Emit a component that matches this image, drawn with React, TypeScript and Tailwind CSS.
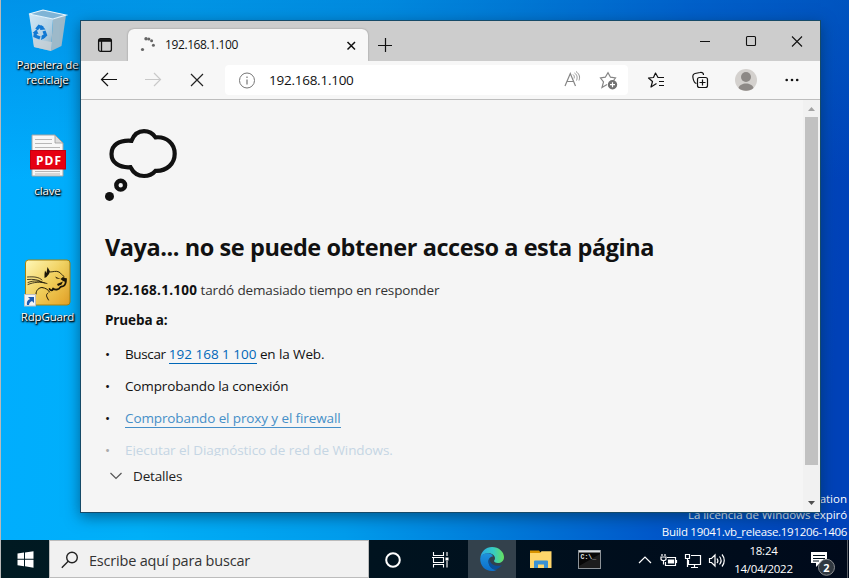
import React from 'react';

function RecycleBin() {
  return (
    <svg className="-translate-x-px" width="44" height="46" viewBox="0 0 44 46">
      <defs>
        <linearGradient id="bin" x1="0" x2="1" y1="0" y2="1">
          <stop offset="0" stopColor="#cfe6f5" />
          <stop offset="0.6" stopColor="#b4d2e5" />
          <stop offset="1" stopColor="#8fa9b8" />
        </linearGradient>
      </defs>
      <path d="M4 5L28 10L26 42L9 38Z" fill="url(#bin)" />
      <path d="M28 10L41 6L36.500 37L26 42Z" fill="#9db9c9" />
      <path d="M4 5L18 1L41 6L28 10Z" fill="#7fb4d6" stroke="#e8f5fc" strokeWidth="1.2" />
      <path d="M8 30L27 33L26 42L9 38Z" fill="#c9d2d8" opacity="0.8" />
      <g fill="none" stroke="#1279d3" strokeWidth="3.2">
        <path d="M11.500 20.500L14 17.500L18 19" />
        <path d="M19 22L20.500 26L17.500 28.500" />
        <path d="M15 29L10 27L10.500 23.500" />
      </g>
      <path d="M16.500 16L20.500 20.500L15 21ZM20.500 28.500L16 31L17 26ZM7.500 24L11.500 20.500L13.500 25Z" fill="#1279d3" />
    </svg>
  );
}

function PdfFile() {
  return (
    <svg width="38" height="44" viewBox="0 0 38 44">
      <path d="M3 1H26L34 9V42H3Z" fill="#f7f7f7" stroke="#a5a5a5" />
      <path d="M26 1V9H34Z" fill="#ddd" stroke="#999" strokeWidth="0.8" />
      <path d="M6 5.500H23M6 9.500H23M6 13.500H31M6 37.500H31M6 40H31" stroke="#b7b7b7" />
      <rect x="1.500" y="16.500" width="35" height="18.500" fill="#e60012" stroke="#c1000e" />
      <text x="19.500" y="30.500" textAnchor="middle" fontFamily="Open Sans, sans-serif" fontSize="12" fontWeight="700" fill="#fff" textLength="25">PDF</text>
    </svg>
  );
}

function RdpGuard() {
  return (
    <svg className="-translate-x-px" width="50" height="48" viewBox="0 0 50 48">
      <defs>
        <linearGradient id="gold" x1="0" x2="1" y1="0" y2="1">
          <stop offset="0" stopColor="#fff8b8" />
          <stop offset="0.5" stopColor="#f0cf5c" />
          <stop offset="1" stopColor="#e4a125" />
        </linearGradient>
      </defs>
      <rect x="3.500" y="1" width="44.500" height="45" rx="3" fill="url(#gold)" stroke="#a58210" />
      <g fill="none" stroke="#1c1608" strokeLinecap="round" strokeLinejoin="round">
        <path d="M28 13C31 13 34 11.500 37 13C39.500 14.500 40 16.500 42 17.500" strokeWidth="0.900" />
        <path d="M44 20C44 23 43.500 26 41.500 27C40 27.500 39 27 38 28.500C37 31 33 31 31 29.500C31 32 28.500 31.500 27.500 30" strokeWidth="1.800" />
        <path d="M5.500 18C12 17.500 17 18 20 21M5.500 20.500C11 20 16 20.500 20 23M6 23.500C12 21 17 22 23 24M6 25.500C12 23 18 22.500 25 24.500" strokeWidth="0.800" />
        <path d="M14 35C14 31 17 28.500 20 28.500M20 28.500C24 29 26.500 31 27.500 33M26 34C23 36 25 38 26.500 41" strokeWidth="1" />
      </g>
      <g fill="#1c1608">
        <path d="M22.500 15L23 11.500L24.500 14L25.500 8L28 12.500L27 15L24.500 18L22.500 19Z" />
        <path d="M41 18L44 19.500L43.500 23L41 22L38.500 20Z" />
        <path d="M33 17.500L38.500 20L34.500 19.500ZM35 25L41 22.500L39.500 25.500L36 27Z" />
      </g>
      <rect x="2.500" y="35.500" width="11" height="11.500" fill="#f4f4f4" stroke="#c0c0c0" />
      <path d="M5 46C4.500 42 6 41 8 40L6 38H12V44L10 42C8 43 7 44 7 46Z" fill="#1f5bb0" />
    </svg>
  );
}

function ThoughtCloud() {
  return (
    <svg width="76" height="76" viewBox="104 127 76 76" fill="none" stroke="#111">
      <path strokeWidth="4.200" d="M131.500 140.800C134 134.500 138 131.200 144 131.200C149 131.200 152.500 133 155.500 137.400C167 136.200 174.700 144 174.700 153.700C174.700 163.500 167 171.300 155.500 170.800C152 174.800 149 176 144 176C138 176 133.500 173 130.500 167.200C119 168 111.500 162.500 111.500 154C111.500 145.500 118.500 139.800 131.500 140.800Z" />
      <circle cx="120.700" cy="185.200" r="4.400" strokeWidth="4.400" />
      <circle cx="109.500" cy="196.400" r="4.500" fill="#111" stroke="none" />
    </svg>
  );
}

function DesktopIcon({ icon, children, className }: { icon: React.ReactNode; children: React.ReactNode; className: string }) {
  return (
    <div className={`flex w-[93px] flex-col items-center ${className}`}>
      {icon}
      <div className="text-center text-[11.5px] leading-[15px] tracking-[-0.15px] text-white [text-shadow:1px_1px_2px_#000,0_1px_2px_#000,1px_1px_1px_#000c]">{children}</div>
    </div>
  );
}

function TabStrip() {
  return (
    <div className="flex h-10 items-end bg-[#cdcdcd] text-[#111]">
      <div className="flex h-8 w-[47px] items-center justify-center rounded-br-md pl-[1px]">
        <svg width="16" height="16" viewBox="0 0 16 16" fill="none" stroke="#111" strokeWidth="1.300">
          <rect x="1.600" y="1.600" width="12.800" height="12.800" rx="2" />
          <path d="M2 3.200H14M4.500 4V14" />
          <path d="M2 3.500H14" strokeWidth="2.600" />
        </svg>
      </div>
      <div className="flex h-8 w-[240px] items-center rounded-t-md bg-[#f7f7f7] pl-3 pr-[11px] shadow-[0_0_2px_#888] [clip-path:inset(-3px_-3px_0_-3px)]">
        <svg width="16" height="16" viewBox="0 0 16 16" fill="#666">
          <circle cx="2.500" cy="12.500" r="1.600" />
          <circle cx="6" cy="1.800" r="1.700" />
          <circle cx="8.800" cy="2" r="1.600" />
          <circle cx="11.600" cy="3.700" r="1.500" />
          <circle cx="13.400" cy="8.300" r="1.500" />
        </svg>
        <span className="ml-[9px] flex-1 text-[12px] tracking-[-0.4px]">192.168.1.100</span>
        <svg width="11" height="11" viewBox="0 0 11 11" stroke="#111" strokeWidth="1.500"><path d="M1.500 2L9 9.500M9 2L1.500 9.500" /></svg>
      </div>
      <div className="flex h-8 w-[34px] items-center justify-center">
        <svg width="14" height="14" viewBox="0 0 14 14" stroke="#111" strokeWidth="1.200"><path d="M0 7.500H14M7.500 0V14" /></svg>
      </div>
      <div className="ml-auto flex h-10 items-center">
        <svg width="138" height="40" viewBox="0 0 138 40" fill="none" stroke="#111" strokeWidth="1.100">
          <path d="M18 20.500H28M110 15.500L120 25.500M120 15.500L110 25.500" />
          <rect x="64.500" y="15.500" width="9" height="9" rx="1" />
        </svg>
      </div>
    </div>
  );
}

function Toolbar() {
  return (
    <div className="flex h-[39px] items-center border-b border-[#bdbdbd] bg-[#f7f7f7]">
      <div className="flex w-36 items-center">
        <svg width="144" height="38" viewBox="0 0 144 38" fill="none" strokeWidth="1.200">
          <path d="M36 18.500H20.500M27 12L20.500 18.500L27 25" stroke="#111" />
          <path d="M64 18.500H79.500M73 12L79.500 18.500L73 25" stroke="#c9c9c9" />
          <path d="M110 13L122 25M122 13L110 25" stroke="#222" />
        </svg>
      </div>
      <div className="flex h-[30px] w-[403px] items-center rounded bg-white pl-[13px]">
        <svg width="17" height="17" viewBox="0 0 17 17" fill="none" stroke="#767676">
          <circle cx="9" cy="8.500" r="7.500" />
          <path d="M9 7.500V12.500M9 4.500V6" strokeWidth="1.200" />
        </svg>
        <span className="ml-[14px] flex-1 text-[13.5px] tracking-[-0.25px] text-[#111]">192.168.1.100</span>
        <svg width="66" height="30" viewBox="562 65 66 30" fill="none" stroke="#858585" strokeWidth="1.200">
          <path d="M565 86L570.300 73.500L575.500 86M566.500 81.500H574" />
          <path d="M573 74.500C574.500 75.500 574.500 77.500 574 78.500M574.500 73C577.500 75 577.500 78 576.500 80.500M576 71.500C580 74.500 580 77.500 579 80.500" strokeWidth="0.900" />
          <path d="M607 84.500L602 87.500L603.500 82L600.500 78L605.300 77.200L608 72.800L610.500 77.200L615.500 78L613.500 80.500" />
          <circle cx="612.500" cy="84.700" r="4.700" fill="#707070" stroke="none" />
          <path d="M610 84.700H615M612.500 82.200V87.200" stroke="#fff" />
        </svg>
      </div>
      <svg width="192" height="38" viewBox="628 61 192 38" fill="none" stroke="#111" strokeWidth="1.200" strokeLinejoin="round">
        <path d="M656.500 83.500L651 87L652.500 81.500L648.500 78L653.500 77.500L655.500 73L658 77.500H664M659 81.500H664M659 85.500H664" />
        <path d="M696.500 83.500C694 83 693.500 81 693 78C692.500 75.500 693 74 695 73.500L700 72.500C702 72 703.500 73 703.500 75" />
        <rect x="697.500" y="77.500" width="10" height="10" rx="2" fill="#f7f7f7" />
        <path d="M699.500 82.500H705.500M702.500 79.500V85.500" />
        <circle cx="746" cy="80" r="11" fill="#d4d1ce" stroke="none" />
        <circle cx="746" cy="77" r="5" fill="#8d8986" stroke="none" />
        <path d="M738.500 88C740 82 752 82 753.500 88C750 91.700 742 91.700 738.500 88Z" fill="#8d8986" stroke="none" />
        <g fill="#111" stroke="none"><circle cx="786.700" cy="80" r="1.300" /><circle cx="792" cy="80" r="1.300" /><circle cx="797.200" cy="80" r="1.300" /></g>
      </svg>
    </div>
  );
}

function ErrorPage() {
  return (
    <div className="flex h-[412px] bg-[#f5f5f5] text-[#111]">
      <div className="flex flex-1 flex-col pl-6 pt-[27px]">
        <div className="-ml-px h-[76px]"><ThoughtCloud /></div>
        <h1 className="mt-7 whitespace-nowrap text-[23.5px] font-bold leading-8 tracking-[-0.43px]">Vaya... no se puede obtener acceso a esta página</h1>
        <p className="mt-[17px] whitespace-nowrap text-[13.5px] leading-5 tracking-[-0.15px] text-[#333]"><b className="tracking-[0.27px] text-[#111]">192.168.1.100</b> tardó demasiado tiempo en responder</p>
        <p className="mt-[10px] text-[13.5px] font-bold leading-5 tracking-[-0.12px]">Prueba a:</p>
        <ul className="mt-2 flex h-[118px] flex-col overflow-hidden whitespace-nowrap text-[13.5px] leading-8 tracking-[-0.11px]">
          <li className="flex h-8 shrink-0"><span className="w-5">•</span><span><span className="tracking-[-0.38px]">Buscar </span><a className="border-b border-[#0067b8] tracking-[0px] text-[#0067b8]">192 168 1 100</a> en la Web.</span></li>
          <li className="flex h-8 shrink-0"><span className="w-5">•</span><span className="tracking-[-0.14px]">Comprobando la conexión</span></li>
          <li className="flex h-8 shrink-0"><span className="w-5">•</span><span><a className="border-b border-[#458fc8] text-[#458fc8]">Comprobando el proxy y el firewall</a></span></li>
          <li className="flex h-8 shrink-0 text-[#c5d6e4]"><span className="w-5 text-[#aaa]">•</span><span className="tracking-[-0.07px]">Ejecutar el Diagnóstico de red de Windows.</span></li>
        </ul>
        <div className="mt-[10px] flex items-center text-[13.5px] leading-5 tracking-[-0.15px] text-[#222]">
          <svg className="ml-[5px] mr-[10px]" width="13" height="8" viewBox="0 0 13 8" fill="none" stroke="#555" strokeWidth="1.200"><path d="M0.500 1L6 6.500L11.500 1" /></svg>
          Detalles
        </div>
      </div>
      <div className="flex w-[17px] flex-col items-center bg-[#f1f1f1]">
        <svg className="h-[17px]" width="17" height="17" viewBox="0 0 17 17"><path d="M5 11H12L8.500 7Z" fill="#a3a3a3" /></svg>
        <div className="h-[348px] w-[13px] bg-[#c1c1c1]" />
        <svg className="mt-auto" width="17" height="17" viewBox="0 0 17 17"><path d="M5 6H12L8.500 10Z" fill="#505050" /></svg>
      </div>
    </div>
  );
}

function Taskbar() {
  return (
    <div className="flex h-[38px] bg-linear-to-r from-[#001a22] to-[#000a1b]">
      <div className="flex w-12 items-center justify-center">
        <svg width="17" height="17" viewBox="0 0 17 17" fill="#fff"><path d="M0.500 2.500L7 1.600V7.700H0.500ZM8 1.500L16.500 0.300V7.700H8ZM0.500 8.700H7V15.200L0.500 14.200ZM8 8.700H16.500V16.700L8 15.300Z" /></svg>
      </div>
      <div className="flex w-80 items-center border border-[#bcbcbc] bg-[#f1f1f1] pl-[11px] pt-0.5">
        <svg width="18" height="18" viewBox="0 0 18 18" fill="none" stroke="#222" strokeWidth="1.400"><circle cx="11" cy="6.500" r="5.300" /><path d="M7.200 10.300L0.800 16.700" /></svg>
        <span className="ml-[10px] pt-0.5 text-[14.5px] tracking-[-0.2px] text-[#333]">Escribe aquí para buscar</span>
      </div>
      <div className="flex w-12 items-center justify-center">
        <svg width="18" height="18" viewBox="0 0 18 18" fill="none" stroke="#fff" strokeWidth="2"><circle cx="9" cy="10" r="6.800" /></svg>
      </div>
      <div className="flex w-[51px] items-center justify-start pl-[15px] pt-px">
        <svg width="18" height="16" viewBox="0 0 18 16" fill="none" stroke="#fff" strokeWidth="1.100"><path d="M1.500 0V3.500H11.500V0M1.500 15.500V12.500H11.500V15.500M0 5.500H11.500V10.500H1.500V5.500M15 0V4M15 9V15.500" /><path d="M13.500 5.500H16.500V8.500H13.500Z" fill="#fff" stroke="none" /></svg>
      </div>
      <div className="flex w-12 items-center justify-center bg-[#33414c]">
        <svg width="24" height="24" viewBox="0 0 24 24">
          <defs>
            <linearGradient id="edgeTop" x1="0" x2="1"><stop offset="0" stopColor="#2aa8e4" /><stop offset="0.550" stopColor="#36cbc4" /><stop offset="1" stopColor="#66e05e" /></linearGradient>
            <linearGradient id="edgeBlue" x1="0" x2="0" y1="0" y2="1"><stop offset="0" stopColor="#1f92dc" /><stop offset="1" stopColor="#0b6fcc" /></linearGradient>
          </defs>
          <path d="M0.300 11C1 4.500 6 0 12 0C19 0 24 5 24 10C24 14 21 16 18 16C15 16 14 14.700 14 14C14 13.300 15 13 15 11.200C15 8 11 6 7.500 6.300C4 6.500 1 8.500 0.300 11Z" fill="url(#edgeTop)" />
          <path d="M0.200 11.500C0.500 8.500 4 6 7.500 6.200C10.500 6.300 13 8 13 9.500C10 9.500 8.200 12 8.500 15C9 20 13 23 17 22.800C15.500 23.700 13.700 24 12 24C5 24 0 18.500 0.200 11.500Z" fill="url(#edgeBlue)" />
          <path d="M9.700 10.800C7.500 14 8.500 19 12 21.500C15 23.500 19 22 22 18C19 19.500 14 19 11.500 16.500C9.800 14.800 9.300 12.700 9.700 10.800Z" fill="#0b4f9a" />
        </svg>
      </div>
      <div className="flex w-[49px] items-center justify-center">
        <svg width="22" height="19" viewBox="0 0 22 19"><path d="M0 0.500H9L11 3H0Z" fill="#d99400" /><path d="M0 3H10L11.500 1.300H21.500V18H0Z" fill="#ffd66b" /><path d="M4 18V11.500Q4 10.500 5 10.500H17Q18 10.500 18 11.500V18H14V14.500H8V18Z" fill="#3b91d3" /></svg>
      </div>
      <div className="flex w-[49px] items-center justify-center">
        <svg width="23" height="19" viewBox="0 0 23 19"><rect x="0.500" y="0.500" width="22" height="18" fill="#080808" stroke="#8d9398" /><path d="M1 1.500H22" stroke="#dce0e3" strokeWidth="2" /><text x="2.500" y="9" fontFamily="Liberation Mono, monospace" fontSize="6.500" fontWeight="700" fill="#e5e5e5">C:\_</text><path d="M1 16L22 4V18H1Z" fill="#444" opacity="0.350" /></svg>
      </div>
      <svg className="ml-auto" width="94" height="38" viewBox="634 540 94 38" fill="none" stroke="#fff" strokeWidth="1.200">
        <path d="M639 563L645 557L651 563" />
        <path d="M667 557.500H675.500V565.500H665.500V562" /><path d="M668.500 560H673.500V563H668.500Z" fill="#fff" /><path d="M676.500 560V563M662 554V556M665 554V556M661 557H666V559C666 561 661 561 661 559ZM663.500 561V564.500" />
        <path d="M691 555.500H700.500V564.500H688.500V560M691 567.500H698M694.500 565V567M685.500 554.500H689.500V558.500H685.500ZM687.500 559V567" />
        <path d="M709.500 558.500H711.500L715 555V566L711.500 562.500H709.500ZM717 558.500C718 560 718 562 717 563M719.500 556.500C721.500 559 721.500 562 719.500 564.500M722 554.500C725 558 725 563 722 566.500" />
      </svg>
      <div className="flex w-[72px] flex-col items-center pr-px pt-0.5 text-[11.5px] leading-[18px] tracking-[-0.25px] text-white"><span>18:24</span><span className="whitespace-nowrap">14/04/2022</span></div>
      <svg width="49" height="38" viewBox="800 540 49 38"><path d="M811 552H827V563H820L816 567V563H811Z" fill="#fff" /><path d="M813 555.500H825M813 558.500H825M813 561H819" stroke="#00101c" strokeWidth="1" /><circle cx="826.500" cy="567.300" r="8" fill="#303840" stroke="#8b8e91" /><text x="826.500" y="571.500" fontFamily="Open Sans, sans-serif" fontSize="11" fontWeight="700" fill="#fff" textAnchor="middle">2</text><path d="M847.500 540V578" stroke="#5c6168" /></svg>
    </div>
  );
}

export default function App() {
  return (
    <div className="flex h-[578px] w-[849px] flex-col overflow-hidden border-l border-[#b9b9b9] font-['Open_Sans','Noto_Sans',sans-serif]">
      <div className="relative flex h-[540px] flex-col overflow-hidden bg-[linear-gradient(180deg,#006cc866_0px,#006cc800_180px),linear-gradient(94deg,#00adff_0%,#00b0f8_20%,#009cec_43%,#007cda_60%,#0058ca_78%,#0042b8_97%)]">
        <DesktopIcon className="h-[134px] pt-[9px]" icon={<RecycleBin />}><div className="pt-[2px]">Papelera de<br />reciclaje</div></DesktopIcon>
        <DesktopIcon className="h-[125px]" icon={<PdfFile />}><div className="pt-[5px]">clave</div></DesktopIcon>
        <DesktopIcon className="" icon={<RdpGuard />}><div className="pt-[2px]">RdpGuard</div></DesktopIcon>
        <div className="absolute bottom-0 right-[2px] whitespace-nowrap text-right text-[11.5px] leading-[16.5px] text-white">Windows 10 Enterprise Evaluation<br /><span className="tracking-[-0.05px]">La licencia de Windows expiró</span><br /><span className="tracking-[-0.3px]">Build 19041.vb_release.191206-1406</span></div>
        <div className="absolute left-[79px] top-5 w-[741px] border border-[#164a68] shadow-[0_4px_14px_#00305099]">
          <TabStrip />
          <Toolbar />
          <ErrorPage />
        </div>
      </div>
      <Taskbar />
    </div>
  );
}
